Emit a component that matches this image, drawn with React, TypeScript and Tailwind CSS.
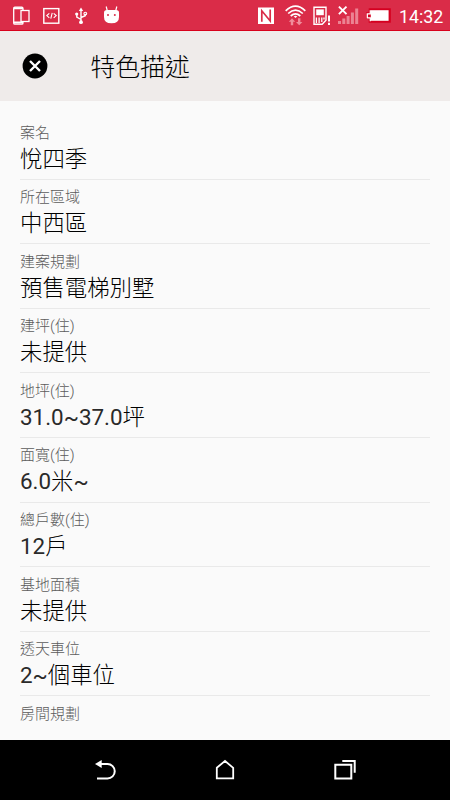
import React from 'react';

interface Feature {
  label: string;
  value?: string;
}

const features: Feature[] = [
  { label: '案名', value: '悅四季' },
  { label: '所在區域', value: '中西區' },
  { label: '建案規劃', value: '預售電梯別墅' },
  { label: '建坪(住)', value: '未提供' },
  { label: '地坪(住)', value: '31.0~37.0坪' },
  { label: '面寬(住)', value: '6.0米~' },
  { label: '總戶數(住)', value: '12戶' },
  { label: '基地面積', value: '未提供' },
  { label: '透天車位', value: '2~個車位' },
  { label: '房間規劃' },
];

function NotificationIcons() {
  return (
    <svg width="120" height="30" viewBox="0 0 120 30" fill="none" stroke="#fff">
      {/* Phone and second device */}
      <rect x="13.7" y="7.2" width="9.3" height="17" rx="1.2" strokeWidth="1.3" />
      <path d="M13.7 8.3h9.3M13.7 22.5h9.3" strokeWidth="2" />
      <rect x="21" y="10.5" width="8" height="11" fill="#da2c48" strokeWidth="1.3" />
      {/* Developer tools */}
      <rect x="43.8" y="8.6" width="15" height="14.6" strokeWidth="1.4" />
      <path d="M49.3 13.3 46.8 15.6l2.5 2.3M53.7 13.3l2.5 2.3-2.5 2.3M52.2 12.8l-1.4 5.8" strokeWidth="1.1" />
      {/* USB */}
      <path d="M81 10v12M81 19.5l-4.2-2.3v-3M81 17.5l4.2-1.8v-2" strokeWidth="1.4" />
      <path d="m81 7.5 2.2 3.5h-4.4z" fill="#fff" stroke="none" />
      <circle cx="81" cy="22.2" r="1.9" fill="#fff" stroke="none" />
      <circle cx="76.7" cy="14" r="1.6" fill="#fff" stroke="none" />
      <circle cx="85.3" cy="13.6" r="1.4" strokeWidth="1.1" />
      {/* Android head */}
      <path d="M104 12.5q0-2.5 3-2.5h9q3 0 3 2.5v4.5q0 6.3-7.5 6.3T104 17z" fill="#fff" stroke="none" />
      <path d="m106.2 6.5 1 4M116.8 6.5l-1 4" strokeWidth="1.2" />
      <circle cx="108" cy="15" r="1" fill="#da2c48" stroke="none" />
      <circle cx="114.8" cy="15" r="1" fill="#da2c48" stroke="none" />
    </svg>
  );
}

function SystemIcons() {
  return (
    <svg width="138" height="30" viewBox="256 0 138 30" fill="none" stroke="#fff">
      {/* NFC */}
      <rect x="258" y="7.5" width="16" height="16.5" fill="#fff" stroke="none" />
      <path d="M261.8 21.8v-11l8.4 10.2V9.6" stroke="#da2c48" strokeWidth="1.7" />
      {/* Wifi */}
      <path d="M285.7 10.8q9.8-9.2 19.6 0M288.2 13.5q7.3-6.8 14.6 0M290.7 16q4.8-4.4 9.6 0" strokeWidth="1.7" />
      <path d="M293.8 16.4q1.7-1.2 3.4 0l-1.7 1.6z" fill="#fff" stroke="none" />
      <path d="m292 18.3 3.2 3.4h-2v3.6h-2.4v-3.6h-2zM299.2 25.3l-3.2-3.4h2v-3.6h2.4v3.6h2z" fill="#f08c9b" stroke="none" />
      {/* SIM card */}
      <path d="M314 7.2h12v13l-3.8 4H314z" strokeWidth="1.4" />
      <path d="M316.2 9.4h7.6v5.8h-7.6z" fill="#fff" stroke="none" />
      <path d="M316.4 17.6v5.4M319.1 17.6V23M321.8 17.6v4.4M324 17.6v2" strokeWidth="1.3" />
      <path d="M329 15.5v6M329 22.7v2.2" strokeWidth="2" />
      {/* No signal */}
      <path d="m338.9 6.6 7.6 7.6M346.5 6.6l-7.6 7.6" strokeWidth="1.9" />
      <path d="M338 21h3v3h-3zM342.3 18.5h3V24h-3zM346.6 16h3v8h-3zM350.9 12.5h3V24h-3zM355.2 8.5h3V24h-3z" fill="#ec8393" stroke="none" />
      {/* Battery */}
      <path d="M369.3 8.9h20.9v13.2h-20.9v-3.6h-2.6v-5.6h2.6z" fill="#d50020" stroke="#d50020" strokeWidth="1.2" />
      <path d="M370.3 10.3v3.5h-3v4h3v3.4" strokeWidth="1.3" />
      <path d="M370.8 10.2h17.8v10.6h-17.8z" fill="#fff" stroke="none" />
    </svg>
  );
}

function StatusBar() {
  return (
    <div className="flex h-[31px] shrink-0 items-start justify-between border-b border-[#d8001c] bg-[#da2c48] text-white">
      <NotificationIcons />
      <div className="flex items-start">
        <SystemIcons />
        <span className="ml-[5px] w-[51px] text-[17.8px] leading-[33px] whitespace-nowrap">14:32</span>
      </div>
    </div>
  );
}

function Header() {
  return (
    <header className="flex h-[70px] shrink-0 items-center bg-[#efebea] pl-[22px]">
      <button aria-label="關閉" className="size-[26px]">
        <svg viewBox="0 0 26 26" fill="none">
          <circle cx="13" cy="13" r="12.4" fill="#000" />
          <path d="m8 8 10 10M18 8 8 18" stroke="#fff" strokeWidth="2.4" />
        </svg>
      </button>
      <h1 className="mt-1 ml-[42.5px] text-[24.8px] leading-9 font-light text-black">特色描述</h1>
    </header>
  );
}

// Latin runs stay at regular weight, the Chinese around them is lighter
function MixedText({ text }: { text: string }) {
  return text.split(/([\x20-\x7e]+)/).map((part, i) => (
    <span key={i} className={i % 2 ? 'font-normal text-[#2a2a2a]' : 'font-light'}>
      {part}
    </span>
  ));
}

function FeatureRow({ label, value }: Feature) {
  return (
    <li className="h-[64.6px] shrink-0 border-b border-[#e9e9e9] pt-[8.5px]">
      <div className="h-[18px] text-[15px] leading-[18px] font-light text-[#5c5c5c]">{label}</div>
      {value && (
        <div className="mt-0.5 text-[22.4px] leading-[30px] text-black">
          <MixedText text={value} />
        </div>
      )}
    </li>
  );
}

function NavigationBar() {
  return (
    <nav className="flex h-[60px] shrink-0 items-center justify-center gap-[90px] bg-black">
      <svg width="30" height="30" viewBox="0 0 30 30" fill="none" stroke="#fff">
        <path d="M8 9h9.5a7.2 7.2 0 0 1 0 14.5H7" strokeWidth="2" />
        <path d="m5 9 6.7-4v8z" fill="#fff" stroke="none" />
      </svg>
      <svg width="30" height="30" viewBox="0 0 30 30" fill="none" stroke="#fff">
        <path d="M6.8 12.8 15 6l8.2 6.8v10.6H6.8z" strokeWidth="1.8" />
      </svg>
      <svg width="30" height="30" viewBox="0 0 30 30" fill="none" stroke="#fff">
        <path d="M5.3 9.8h16v13.6h-16z" strokeWidth="2" />
        <path d="M12.3 6h12.4v11.8" strokeWidth="2" />
      </svg>
    </nav>
  );
}

export default function App() {
  return (
    <div className="flex h-[800px] w-[450px] flex-col overflow-hidden bg-[#fafafa] font-[Roboto,'Noto_Sans_CJK_TC',sans-serif]">
      <StatusBar />
      <Header />
      <ul className="flex min-h-0 flex-1 flex-col overflow-hidden px-5 pt-3.5">
        {features.map((feature) => (
          <FeatureRow key={feature.label} {...feature} />
        ))}
      </ul>
      <NavigationBar />
    </div>
  );
}
